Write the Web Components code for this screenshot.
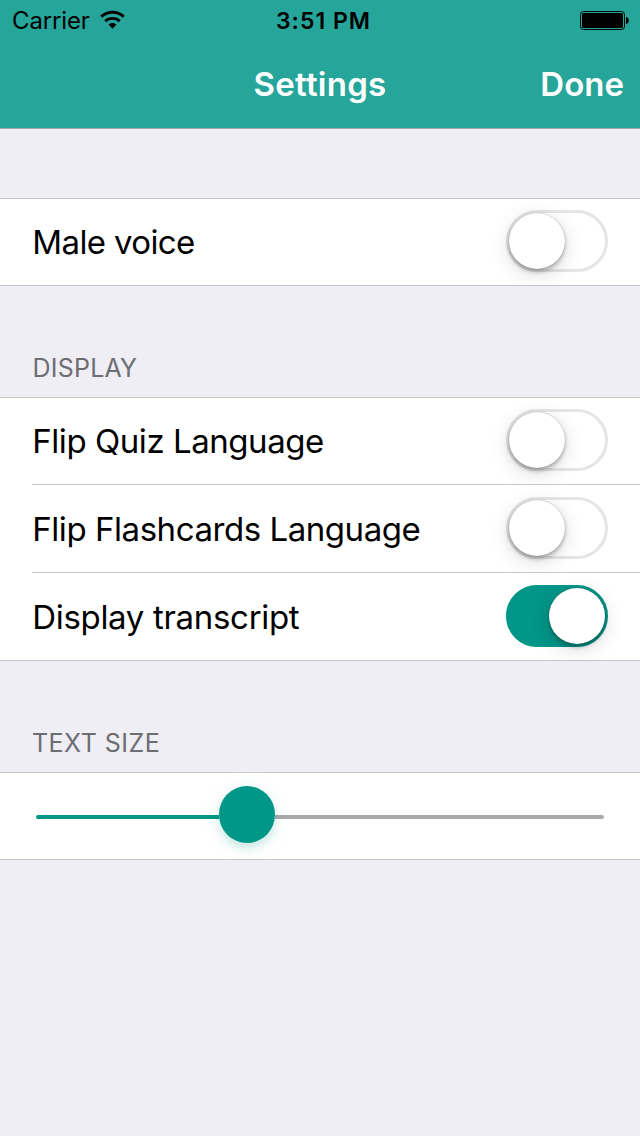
<!DOCTYPE html>
<html lang="en"><head><meta charset="utf-8"><title>Settings</title>
<style>
html,body{margin:0;background:#efeef4}
body{width:640px;height:1136px;overflow:hidden;font-family:Inter,"Liberation Sans",sans-serif;color:#000}
</style></head><body>
<settings-screen></settings-screen>
<script>
function define(name, html, setup){
  const t=document.createElement('template');t.innerHTML=html;
  customElements.define(name,class extends HTMLElement{
    connectedCallback(){
      if(this.shadowRoot)return;
      const r=this.attachShadow({mode:'open'});
      r.append(t.content.cloneNode(true));
      if(setup)setup(this,r);
    }
  });
}
define('status-bar',`<style>
:host{display:grid;grid-template-columns:1fr auto 1fr;height:40px;line-height:42px;font-size:24px;padding:0 11px 0 12px}
.left{display:flex;letter-spacing:-.15px}
.left span{width:88px}
.left svg{margin-top:10px}
.time{font-weight:600;font-size:23px;line-height:42px;letter-spacing:1px;padding-left:6px}
.bat{justify-self:end;margin-top:11px}
svg{display:block}
</style>
<div class="left"><span>Carrier</span><svg width="25" height="19" viewBox="0 0 25 19"><g fill="none" stroke="#000" stroke-width="2.8"><path d="M1.2 6.6C7.6.8 17.4.8 23.8 6.6"/><path d="M5.2 11.1C9.3 7.4 15.7 7.4 19.8 11.1"/></g><path d="M8.5 14.6C10.8 12.5 14.2 12.5 16.5 14.6L12.5 18.8Z"/></svg></div>
<span class="time">3:51 PM</span>
<svg class="bat" width="49" height="19" viewBox="0 0 49 19"><rect x=".5" y=".5" width="44" height="18" rx="3" fill="none" stroke="#000"/><rect x="2" y="2" width="41" height="15" rx="1.5"/><path d="M46 6C49.7 6.4 49.7 12.6 46 13Z"/></svg>`);
define('nav-bar',`<style>
:host{display:grid;grid-template-columns:1fr auto 1fr;height:88px;line-height:88px;font-size:33px;font-weight:600;color:#fff;padding:0 16px}
.title{grid-column:2;letter-spacing:.25px}
.done{grid-column:3;justify-self:end}
</style><span class="title"><slot></slot></span><span class="done"><slot name="action"></slot></span>`);
define('toggle-switch',`<style>
:host{display:block;box-sizing:border-box;width:102px;height:62px;border-radius:31px;border:3px solid #e5e5e5;flex:none}
i{display:block;width:56px;height:56px;border-radius:50%;background:#fff;box-shadow:0 3px 4px rgba(0,0,0,.26),0 0 1px rgba(0,0,0,.4),0 5px 20px rgba(0,0,0,.15)}
:host([on]){background:#009688;border-color:#009688}
:host([on]) i{margin-left:40px}
</style><i></i>`);
define('setting-row',`<style>
:host{display:flex;justify-content:space-between;box-sizing:border-box;height:88px;padding:0 32px;line-height:88px;font-size:33px;letter-spacing:-.45px}
span{padding-left:.3px}
toggle-switch{margin-top:12px}
</style><span><slot></slot></span><toggle-switch></toggle-switch>`,(h,r)=>{
  r.querySelector('toggle-switch').toggleAttribute('on',h.hasAttribute('on'));
});
define('setting-group',`<style>
:host{display:block;background:#fff;box-shadow:inset 0 1px #c8c7cc,inset 0 -1px #c8c7cc}
::slotted(:not(:last-child)){background:linear-gradient(#c8c7cc,#c8c7cc) 32px 100%/100% 1px no-repeat}
</style><slot></slot>`);
define('group-title',`<style>
:host{display:block;box-sizing:border-box;padding:64px 32px 0;line-height:36px;font-size:25px;color:#6d6d72}
</style><slot></slot>`);
define('size-slider',`<style>
:host{display:grid;grid-template-columns:183px 56px 1fr;height:88px;padding:0 36px;box-sizing:border-box}
.track{height:4px;margin-top:43px;background:#a9a9a9;border-radius:0 2px 2px 0}
.fill{background:#009688;border-radius:2px 0 0 2px}
.knob{height:57px;margin-top:14px;border-radius:50%;background:#009688;box-shadow:0 5px 8px rgba(0,150,136,.16),0 3px 20px rgba(0,150,136,.09)}
.fill,.rest{position:relative}.knob{position:relative;z-index:1}
</style><div class="track fill"></div><div class="knob"></div><div class="track rest"></div>`);
define('settings-screen',`<style>
:host{display:block;width:640px;height:1136px;background:#efeef4}
header{height:128px;background:#26a69a;border-bottom:1px solid #a5a5a9;margin-bottom:69px}
group-title{height:111px}
.display{letter-spacing:.22px;padding-left:32.5px}
.size{letter-spacing:.48px}
.voice{letter-spacing:-.62px}
.transcript{letter-spacing:-.32px}
</style>
<header><status-bar></status-bar><nav-bar>Settings<span slot="action">Done</span></nav-bar></header>
<setting-group><setting-row class="voice">Male voice</setting-row></setting-group>
<group-title class="display">DISPLAY</group-title>
<setting-group><setting-row>Flip Quiz Language</setting-row><setting-row>Flip Flashcards Language</setting-row><setting-row class="transcript" on>Display transcript</setting-row></setting-group>
<group-title class="size">TEXT SIZE</group-title>
<setting-group><size-slider></size-slider></setting-group>`);
</script></body></html>
